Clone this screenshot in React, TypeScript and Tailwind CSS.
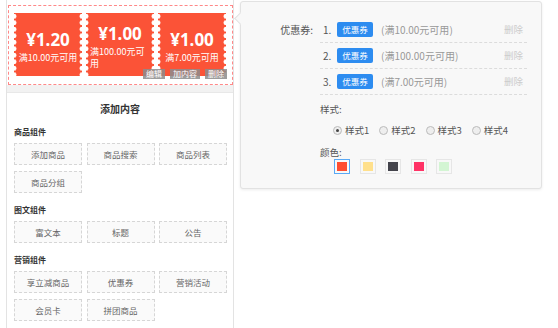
import React from 'react';

const coupons = [
  { price: '¥1.20', cond: '满10.00元可用' },
  { price: '¥1.00', cond: '满100.00元可用' },
  { price: '¥1.00', cond: '满7.00元可用' },
];

const groups = [
  { title: '商品组件', items: ['添加商品', '商品搜索', '商品列表', '商品分组'] },
  { title: '图文组件', items: ['富文本', '标题', '公告'] },
  { title: '营销组件', items: ['享立减商品', '优惠券', '营销活动', '会员卡', '拼团商品'] },
];

const couponRows = ['满10.00元可用', '满100.00元可用', '满7.00元可用'];
const swatches = ['#ff4d30', '#ffe08c', '#44444c', '#ff3366', '#d3f5d3'];

export default function App() {
  return (
    <div
      className="w-[558px] h-[328px] bg-white overflow-hidden flex items-start text-[#333]"
      style={{ fontFamily: '"Noto Sans CJK SC", "Noto Sans", sans-serif' }}
    >
      {/* Left: preview + component picker */}
      <div className="ml-[6px] w-[228px] h-[328px] border-x border-[#e3e3e3] shrink-0">
        <div className="relative mt-[5px] ml-[1px] w-[225px] h-[80px] border border-dashed border-[#f88] pt-[7px] pl-[5px]">
          <div className="flex gap-[4px]">
            {coupons.map((c, i) => (
              <div
                key={i}
                className="w-[68px] h-[63px] bg-[#fb5337] text-white flex flex-col items-center justify-center pt-[5px] px-[4px] [background-image:radial-gradient(circle_at_0_50%,#fff_2.2px,transparent_2.8px),radial-gradient(circle_at_100%_50%,#fff_2.2px,transparent_2.8px)] [background-size:5px_6.5px] [background-position:left_top,right_top] [background-repeat:repeat-y]"
              >
                <div className="font-['Noto_Sans','Liberation_Sans',sans-serif] text-[17px] leading-[20px] font-bold">{c.price}</div>
                <div className="inline-block text-left text-[9px] leading-[12px] mt-[2px]">{c.cond}</div>
              </div>
            ))}
          </div>
          {/* hover actions */}
          <div className="absolute right-[5px] top-[63px] flex gap-[5px] text-[8px] leading-[10px] text-white">
            <span className="px-[3px] bg-[rgba(140,140,140,0.85)]">编辑</span>
            <span className="px-[3px] bg-[rgba(140,140,140,0.85)]">加内容</span>
            <span className="px-[3px] bg-[rgba(140,140,140,0.85)]">删除</span>
          </div>
        </div>
        <div className="h-[8px] bg-[#f2f2f2] border-b border-[#e8e8e8]" />

        <div className="h-[30px] flex items-center justify-center text-[10px] font-bold">添加内容</div>

        <div className="pl-[7px]">
          {groups.map((g, gi) => (
            <div key={g.title} className={gi === 0 ? 'mt-[2px]' : 'mt-[10px]'}>
              <div className="text-[8px] leading-[14px] font-bold mb-[4px]">{g.title}</div>
              <div className="grid grid-cols-[68px_68px_68px] gap-x-[4.5px] gap-y-[6px]">
                {g.items.map((it) => (
                  <div
                    key={it}
                    className="h-[22px] border border-dashed border-[#d6d6d6] bg-[#fafafa] flex items-center justify-center text-[8.5px] text-[#666]"
                  >
                    {it}
                  </div>
                ))}
              </div>
            </div>
          ))}
        </div>
      </div>

      {/* Right: coupon settings popover */}
      <div className="relative ml-[6px] mt-[1px] w-[302px] h-[188px] bg-[#f8f8f8] border border-[#e2e2e2] rounded-[3px] shadow-[0_1px_3px_rgba(0,0,0,0.08)] shrink-0 pt-[15px]">
        <div className="absolute -left-[5px] top-[12px] w-[9px] h-[9px] rotate-45 bg-[#f8f8f8] border-l border-b border-[#e2e2e2]" />

        <div className="flex">
          <div className="w-[72px] text-right text-[10px] leading-[26px] text-[#555]">优惠券:</div>
          <div className="ml-[7px] w-[207px]">
            {couponRows.map((r, i) => (
              <div key={i} className="h-[26px] flex items-center border-b border-dashed border-[#dcdcdc] pl-[3px] pr-[4px]">
                <span className="w-[14px] text-[10px] text-[#555]">{i + 1}.</span>
                <span className="w-[36px] h-[15px] bg-[#2d8cf0] rounded-[2px] text-white text-[8.5px] flex items-center justify-center">
                  优惠券
                </span>
                <span className="ml-[8px] text-[10px] text-[#999]">({r})</span>
                <span className="ml-auto text-[9.5px] text-[#ccc]">删除</span>
              </div>
            ))}

            <div className="mt-[7px] text-[9.5px] leading-[14px] text-[#555]">样式:</div>
            <div className="mt-[7px] pl-[13px] flex gap-[10px] text-[9.5px] leading-[14px] text-[#555]">
              {['样式1', '样式2', '样式3', '样式4'].map((s, i) => (
                <div key={s} className="flex items-center gap-[3px]">
                  <span className="w-[9px] h-[9px] rounded-full border border-[#bbb] bg-[#eee] flex items-center justify-center">
                    {i === 0 && <span className="w-[3px] h-[3px] rounded-full bg-[#444]" />}
                  </span>
                  <span>{s}</span>
                </div>
              ))}
            </div>

            <div className="mt-[8px] text-[9.5px] leading-[14px] text-[#555]">颜色:</div>
            <div className="pl-[14px] flex gap-[9.5px]">
              {swatches.map((c, i) => (
                <div
                  key={c}
                  className={
                    'w-[16px] h-[15px] p-[2px] border ' +
                    (i === 0 ? 'border-[#5aa9f5]' : 'border-[#e6e6e6]')
                  }
                >
                  <div className="w-full h-full" style={{ backgroundColor: c }} />
                </div>
              ))}
            </div>
          </div>
        </div>
      </div>
    </div>
  );
}
